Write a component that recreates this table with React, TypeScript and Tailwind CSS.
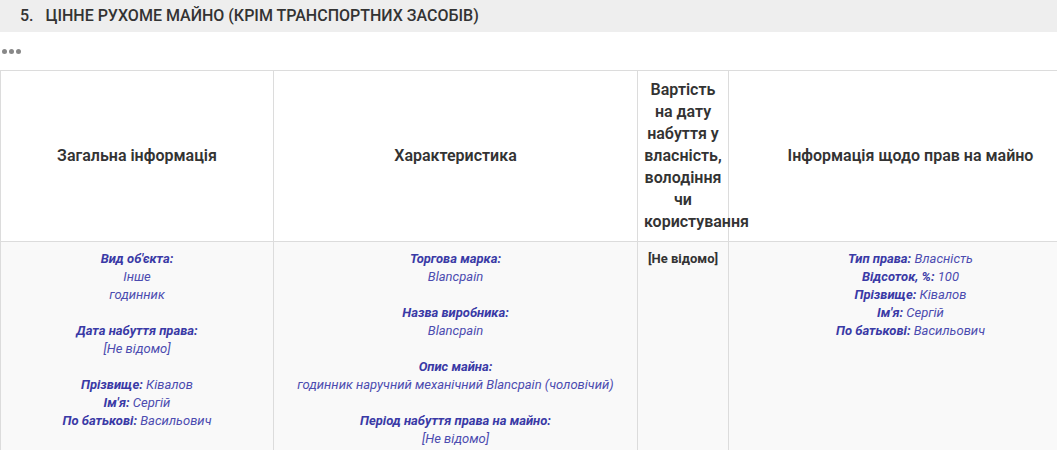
import React from 'react';

const Label = ({ children }: { children: React.ReactNode }) => (
  <span className="font-bold text-[#3a3aa6]">{children}</span>
);

const Val = ({ children }: { children: React.ReactNode }) => (
  <span className="text-[#4c4cb0]">{children}</span>
);

export default function App() {
  return (
    <div className="w-[1057px] h-[450px] overflow-hidden bg-white font-['Roboto',sans-serif] text-[#333]">
      {/* Section title */}
      <div className="h-8 bg-[#eeeeee] flex items-center pl-5">
        <h2 className="text-[16px] font-medium text-[#333]">
          5.&nbsp;&nbsp; ЦІННЕ РУХОМЕ МАЙНО (КРІМ ТРАНСПОРТНИХ ЗАСОБІВ)
        </h2>
      </div>

      <div className="h-[38px] flex items-center pl-[2px] gap-[2px]">
        <span className="w-[5px] h-[5px] rounded-full bg-[#888]" />
        <span className="w-[5px] h-[5px] rounded-full bg-[#888]" />
        <span className="w-[5px] h-[5px] rounded-full bg-[#888]" />
      </div>

      <table className="table-fixed border-collapse w-[1092px]">
        <colgroup>
          <col className="w-[273px]" />
          <col className="w-[364px]" />
          <col className="w-[91px]" />
          <col className="w-[364px]" />
        </colgroup>
        <thead>
          <tr className="h-[171px] text-[16px] leading-[22px] text-[#333]">
            <th className="border border-[#dcdcdc] px-1.5 align-middle text-center font-semibold">Загальна інформація</th>
            <th className="border border-[#dcdcdc] px-1.5 align-middle text-center font-semibold">Характеристика</th>
            <th className="border border-[#dcdcdc] px-1.5 align-middle text-center font-semibold">
              Вартість на дату набуття у власність, володіння чи користування
            </th>
            <th className="border border-[#dcdcdc] px-1.5 align-middle text-center font-semibold">Інформація щодо прав на майно</th>
          </tr>
        </thead>
        <tbody>
          <tr className="bg-[#f9f9f9] text-[13px] leading-[18px] align-top">
            <td className="border border-[#dcdcdc] px-1.5 pt-2 pb-2 text-center italic">
              <Label>Вид об'єкта:</Label>
              <br />
              <Val>Інше</Val>
              <br />
              <Val>годинник</Val>
              <br />
              <br />
              <Label>Дата набуття права:</Label>
              <br />
              <Val>[Не відомо]</Val>
              <br />
              <br />
              <Label>Прізвище:</Label> <Val>Ківалов</Val>
              <br />
              <Label>Ім'я:</Label> <Val>Сергій</Val>
              <br />
              <Label>По батькові:</Label> <Val>Васильович</Val>
              <br />
              <br />
            </td>
            <td className="border border-[#dcdcdc] px-1.5 pt-2 pb-2 text-center italic">
              <Label>Торгова марка:</Label>
              <br />
              <Val>Blancpain</Val>
              <br />
              <br />
              <Label>Назва виробника:</Label>
              <br />
              <Val>Blancpain</Val>
              <br />
              <br />
              <Label>Опис майна:</Label>
              <br />
              <Val>годинник наручний механічний Blancpain (чоловічий)</Val>
              <br />
              <br />
              <Label>Період набуття права на майно:</Label>
              <br />
              <Val>[Не відомо]</Val>
            </td>
            <td className="border border-[#dcdcdc] px-1.5 pt-2 pb-2 text-center font-bold text-[#333]">
              [Не відомо]
            </td>
            <td className="border border-[#dcdcdc] px-1.5 pt-2 pb-2 text-center italic">
              <Label>Тип права:</Label> <Val>Власність</Val>
              <br />
              <Label>Відсоток, %:</Label> <Val>100</Val>
              <br />
              <Label>Прізвище:</Label> <Val>Ківалов</Val>
              <br />
              <Label>Ім'я:</Label> <Val>Сергій</Val>
              <br />
              <Label>По батькові:</Label> <Val>Васильович</Val>
            </td>
          </tr>
        </tbody>
      </table>
    </div>
  );
}
